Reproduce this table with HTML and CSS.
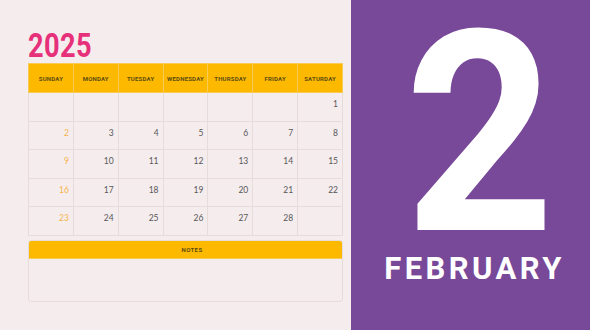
FILE: index.html
```html
<!DOCTYPE html>
<html>
<head>
<meta charset="utf-8">
<link rel="stylesheet" href="styles.css">
</head>
<body>
<div class="page">
  <section class="left">
    <h1 class="year">2025</h1>
    <div class="cal">
      <div class="head">
        <div>SUNDAY</div><div>MONDAY</div><div>TUESDAY</div><div>WEDNESDAY</div><div>THURSDAY</div><div>FRIDAY</div><div>SATURDAY</div>
      </div>
      <div class="body">
        <div></div><div></div><div></div><div></div><div></div><div></div><div>1</div>
        <div class="sun">2</div><div>3</div><div>4</div><div>5</div><div>6</div><div>7</div><div>8</div>
        <div class="sun">9</div><div>10</div><div>11</div><div>12</div><div>13</div><div>14</div><div>15</div>
        <div class="sun">16</div><div>17</div><div>18</div><div>19</div><div>20</div><div>21</div><div>22</div>
        <div class="sun">23</div><div>24</div><div>25</div><div>26</div><div>27</div><div>28</div><div></div>
      </div>
    </div>
    <div class="notes">
      <div class="notes-head">NOTES</div>
      <div class="notes-body"></div>
    </div>
  </section>
  <section class="right">
    <div class="big">2</div>
    <div class="month">FEBRUARY</div>
  </section>
</div>
</body>
</html>
```
FILE: styles.css
```css
html, body {
  margin: 0;
  padding: 0;
}
body {
  width: 590px;
  height: 330px;
  overflow: hidden;
  background: #f5ecee;
  font-family: Roboto, "Liberation Sans", sans-serif;
}
.page {
  display: flex;
  height: 330px;
}
.left {
  width: 351px;
  box-sizing: border-box;
  padding: 28px 8px 0 28px;
  background: #f5ecee;
}
.year {
  margin: 0;
  height: 35px;
  font-size: 34px;
  line-height: 34px;
  font-weight: 700;
  color: #e7307a;
  transform: scaleX(0.8);
  transform-origin: left center;
  letter-spacing: 0.5px;
}
.cal {
  width: 315px;
}
.head {
  display: grid;
  grid-template-columns: repeat(7, 1fr);
  gap: 1px;
  background: #f8cb55;
  border: 1px solid #f8cb55;
  box-sizing: border-box;
  height: 30px;
}
.head div {
  background: #fdb900;
  display: flex;
  align-items: center;
  justify-content: center;
  font-size: 6px;
  font-weight: 700;
  color: #5e4d12;
  letter-spacing: 0.2px;
}
.body {
  display: grid;
  grid-template-columns: repeat(7, 1fr);
  grid-auto-rows: 1fr;
  gap: 1px;
  background: #e6dcd9;
  border: 1px solid #e6dcd9;
  border-top: none;
  box-sizing: border-box;
  height: 143px;
}
.body div {
  background: #f5ecee;
  text-align: right;
  padding: 6px 4px 0 0;
  font-family: Lato, "Open Sans", sans-serif;
  font-size: 8.5px;
  line-height: 10px;
  color: #585858;
}
.body div.sun {
  color: #f7b44a;
}
.notes {
  width: 315px;
  margin-top: 4px;
  border: 1px solid #e6dcd9;
  border-radius: 3px;
  box-sizing: border-box;
  overflow: hidden;
}
.notes-head {
  height: 18px;
  background: #fdb900;
  border-bottom: 1px solid #f8cb55;
  box-sizing: border-box;
  display: flex;
  align-items: center;
  justify-content: center;
  padding-left: 13px;
  font-size: 6px;
  font-weight: 700;
  color: #5e4d12;
  letter-spacing: 0.4px;
}
.notes-body {
  height: 42px;
}
.right {
  flex: 1;
  background: #784899;
  display: flex;
  flex-direction: column;
  align-items: center;
  padding: 34px 0 0 8px;
  box-sizing: border-box;
  color: #ffffff;
}
.big {
  font-size: 281px;
  line-height: 200px;
  height: 200px;
  font-weight: 700;
  transform: translateX(5px) scaleX(0.93);
}
.month {
  margin-top: 19px;
  font-size: 31px;
  line-height: 31px;
  font-weight: 700;
  letter-spacing: 3.4px;
}
```
